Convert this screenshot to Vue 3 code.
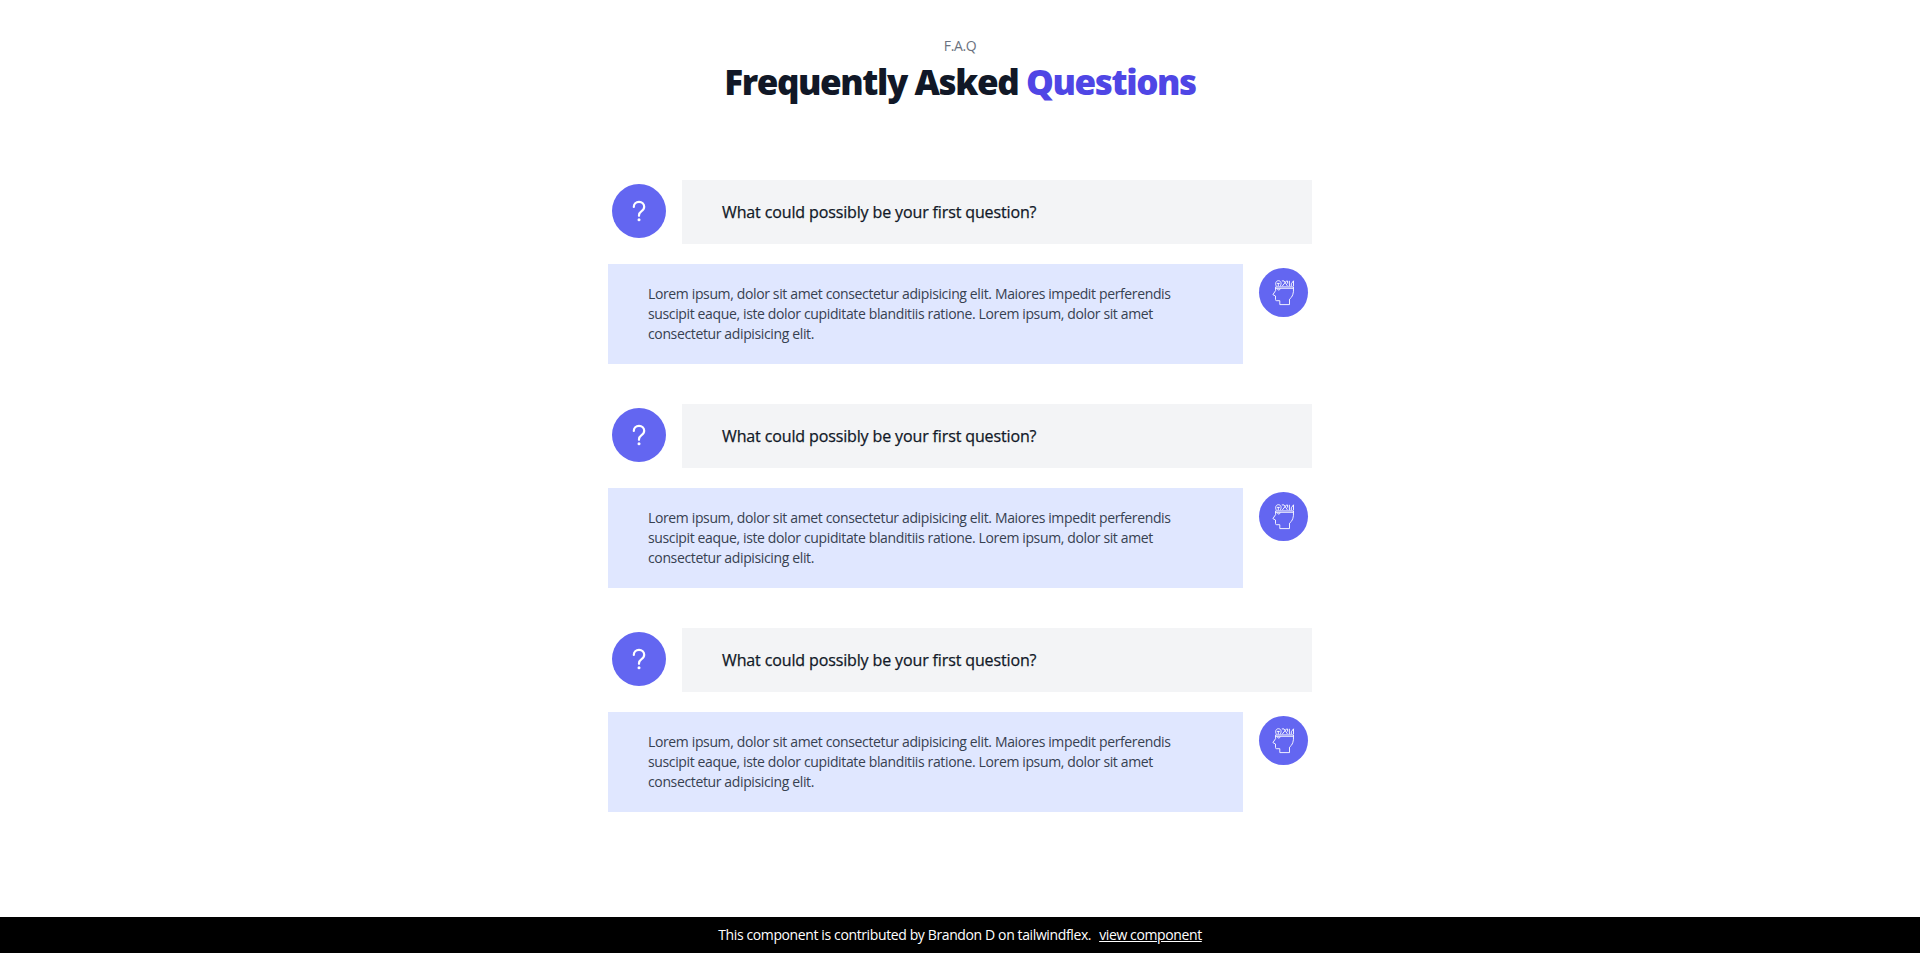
<script setup>
const items = [1, 2, 3].map((id) => ({
  id,
  question: 'What could possibly be your first question?',
  answer: [
    'Lorem ipsum, dolor sit amet consectetur adipisicing elit. Maiores impedit perferendis',
    'suscipit eaque, iste dolor cupiditate blanditiis ratione. Lorem ipsum, dolor sit amet',
    'consectetur adipisicing elit.',
  ],
}))
</script>

<template>
  <div class="page">
    <main class="faq">
      <header class="heading">
        <p class="eyebrow">F.A.Q</p>
        <h1 class="title">Frequently Asked <span class="accent">Questions</span></h1>
      </header>

      <ul class="list">
        <li v-for="item in items" :key="item.id" class="item">
          <div class="row">
            <div class="badge badge-question">
              <svg viewBox="0 0 54 54" fill="none">
                <path d="M21.8 22.9C21.8 19.9 24 17.9 27 17.9C30 17.9 32.2 20 32.2 22.8C32.2 25 31 26.2 29.3 27.3C27.6 28.5 27 29.3 27 31.2V31.8" stroke="#fff" stroke-width="2.2" stroke-linecap="round" />
                <circle cx="27" cy="35.7" r="1.5" fill="#fff" />
              </svg>
            </div>
            <div class="question"><span>{{ item.question }}</span></div>
          </div>
          <div class="row">
            <div class="answer">
              <p v-for="(line, i) in item.answer" :key="i"><span>{{ line }}</span></p>
            </div>
            <div class="badge badge-answer">
              <svg viewBox="0 0 49 49" fill="none" stroke="#fff" stroke-width="0.9" stroke-linecap="round" stroke-linejoin="round">
                <path d="M16.6 20.3H34.5C34.8 25.2 33.5 29.2 30.5 31.2V36.6H20.8V32.7H17.6C16.8 32.7 16.5 32.3 16.5 31.4V28L13.9 26.6L16.6 22.6V18.9H34.5V20.3" />
                <path d="M18.4 21.1C18.5 22.5 20.9 22.5 21.2 21" />
                <path d="M17.2 17.9C15.7 15.5 17 12.7 19.4 12.7C21.9 12.7 23 15.5 21.4 17.9M18.2 15.4H20.4M19.3 15.4V17.8" />
                <path d="M23.2 12.9H25L28.2 17.6M23.5 17.8L27.4 13H28.6V15.2M30.4 13.2V17.8" />
                <path d="M32.3 17.8V15.8L34.5 12.8V17.8" />
              </svg>
            </div>
          </div>
        </li>
      </ul>
    </main>

    <footer class="footer">
      <span class="credit">This component is contributed by Brandon D on tailwindflex.</span>
      <a class="link" href="#">view component</a>
    </footer>
  </div>
</template>

<style>
body {
  margin: 0;
  background: #fff;
}
</style>

<style scoped>
.page {
  display: flex;
  flex-direction: column;
  height: 953px;
  overflow: hidden;
  font-family: "Open Sans", "Noto Sans", sans-serif;
}
.faq {
  flex: 1;
  width: 704px;
  margin: 0 auto;
}
.heading {
  height: 144px;
  padding-top: 36px;
  text-align: center;
  white-space: nowrap;
}
.eyebrow {
  margin: 0;
  font-size: 14px;
  line-height: 20px;
  letter-spacing: -0.4px;
  color: #6b7280;
}
.title {
  margin: 6px 0 0;
  font-size: 35px;
  line-height: 40px;
  font-weight: 800;
  letter-spacing: -1.4px;
  color: #111827;
}
.accent {
  color: #4f46e5;
}
.list {
  list-style: none;
  margin: 0;
  padding: 0;
  display: flex;
  flex-direction: column;
  gap: 40px;
}
.item {
  display: flex;
  flex-direction: column;
  gap: 20px;
}
.row {
  display: flex;
  align-items: flex-start;
  gap: 16px;
}
.badge {
  flex: none;
  margin-top: 4px;
  border-radius: 50%;
  background: #6366f1;
}
.badge svg {
  display: block;
  width: 100%;
  height: 100%;
}
.badge-question {
  width: 54px;
  height: 54px;
  margin-left: 4px;
}
.badge-answer {
  width: 49px;
  height: 49px;
}
.question {
  flex: 1;
  height: 64px;
  box-sizing: border-box;
  padding: 20px 40px;
  background: #f3f4f6;
  color: #111827;
  font-size: 16px;
  line-height: 24px;
  font-weight: 500;
  -webkit-text-stroke: 0.25px currentColor;
  letter-spacing: -0.13px;
  white-space: nowrap;
}
.answer {
  width: 635px;
  height: 100px;
  box-sizing: border-box;
  padding: 20px 40px;
  background: #e0e7ff;
  color: #374151;
  font-size: 14px;
  line-height: 20px;
  letter-spacing: -0.365px;
  white-space: nowrap;
}
.answer p {
  margin: 0;
}
.footer {
  display: flex;
  justify-content: center;
  gap: 8px;
  height: 36px;
  background: #000;
  color: #fff;
  font-size: 14px;
  line-height: 36px;
  letter-spacing: -0.38px;
  white-space: nowrap;
}
.link {
  color: inherit;
  text-decoration: underline;
}
</style>
